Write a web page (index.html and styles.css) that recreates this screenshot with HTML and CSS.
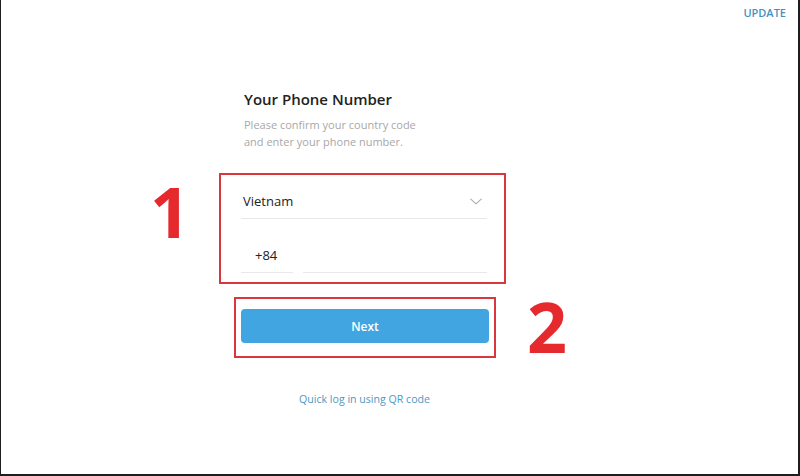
FILE: index.html
```html
<!DOCTYPE html>
<html lang="en">
<head>
    <meta charset="UTF-8">
    <meta name="viewport" content="width=device-width, initial-scale=1.0">
    <title>Your Phone Number</title>
    <link rel="stylesheet" href="styles.css">
</head>
<body>
    <div class="screen">
        <div class="topbar">
            <a class="update" href="#">UPDATE</a>
        </div>

        <div class="login">
            <h2 class="title">Your Phone Number</h2>
            <p class="hint">Please confirm your country code<br>and enter your phone number.</p>

            <div class="mark mark-fields">
                <span class="step step-1">1</span>
                <div class="field country">
                    <span>Vietnam</span>
                    <svg class="chevron" width="12" height="7" viewBox="0 0 12 7">
                        <path d="M0.5 0.8 L6 5.8 L11.5 0.8" fill="none" stroke="#a9a9a9" stroke-width="1.1"/>
                    </svg>
                </div>
                <div class="phone-row">
                    <div class="field code">+84</div>
                    <div class="field number"></div>
                </div>
            </div>

            <div class="mark mark-next">
                <span class="step step-2">2</span>
                <button class="next">Next</button>
            </div>

            <a class="qr-link" href="#">Quick log in using QR code</a>
        </div>
    </div>
</body>
</html>
```

FILE: styles.css
```css
body {
    margin: 0;
    font-family: "Open Sans", "Noto Sans", Arial, sans-serif;
    background: #fff;
}

.screen {
    height: 476px;
    box-sizing: border-box;
    border-left: 1px solid #1e1e1e;
    border-right: 2px solid #1e1e1e;
    border-bottom: 2px solid #1e1e1e;
    overflow: hidden;
}

.topbar {
    display: flex;
    justify-content: flex-end;
    padding: 5px 12px 0 0;
}

.update {
    font-size: 11px;
    line-height: 16px;
    font-weight: 600;
    color: #3f95c0;
    text-decoration: none;
}

.login {
    width: 247px;
    margin-left: 240px;
    padding-top: 68px;
    display: flex;
    flex-direction: column;
}

.title {
    margin: 0;
    font-size: 15px;
    line-height: 20px;
    font-weight: 600;
    color: #222;
    padding-left: 3px;
}

.hint {
    margin: 7px 0 0;
    padding-left: 3px;
    font-size: 11px;
    line-height: 17px;
    color: #a8a8a8;
}

/* red highlight frames */
.mark {
    position: relative;
    border: 2px solid #d9363e;
}

.mark-fields {
    margin: 23px -18px 0 -22px;
    padding: 8px 17px 9px 20px;
}

.mark-next {
    margin: 13px -8px 0 -7px;
    padding: 10px 5px 13px 5px;
}

.step {
    position: absolute;
    font-size: 70px;
    line-height: 70px;
    font-weight: 700;
    color: #e6292d;
}

.step-1 {
    right: calc(100% + 31px);
    top: 1px;
}

.step-2 {
    left: calc(100% + 33px);
    top: -8px;
}

.field {
    padding: 9px 0 8px;
    border-bottom: 1px solid #e8e8e8;
    font-size: 13px;
    line-height: 18px;
    color: #222;
    min-height: 18px;
}

.country {
    display: flex;
    align-items: center;
    justify-content: space-between;
    padding-left: 2px;
    padding-right: 5px;
}

.phone-row {
    display: flex;
    gap: 10px;
    margin-top: 18px;
}

.code {
    width: 38px;
    padding-left: 14px;
}

.number {
    flex: 1;
}

.next {
    display: block;
    width: 100%;
    height: 34px;
    border: none;
    border-radius: 4px;
    background: #40a5e0;
    color: #fff;
    font-family: inherit;
    font-size: 12px;
    font-weight: 600;
    cursor: pointer;
}

.qr-link {
    margin-top: 33px;
    align-self: center;
    font-size: 10.6px;
    line-height: 17px;
    color: #4f98bf;
    text-decoration: none;
}
```
